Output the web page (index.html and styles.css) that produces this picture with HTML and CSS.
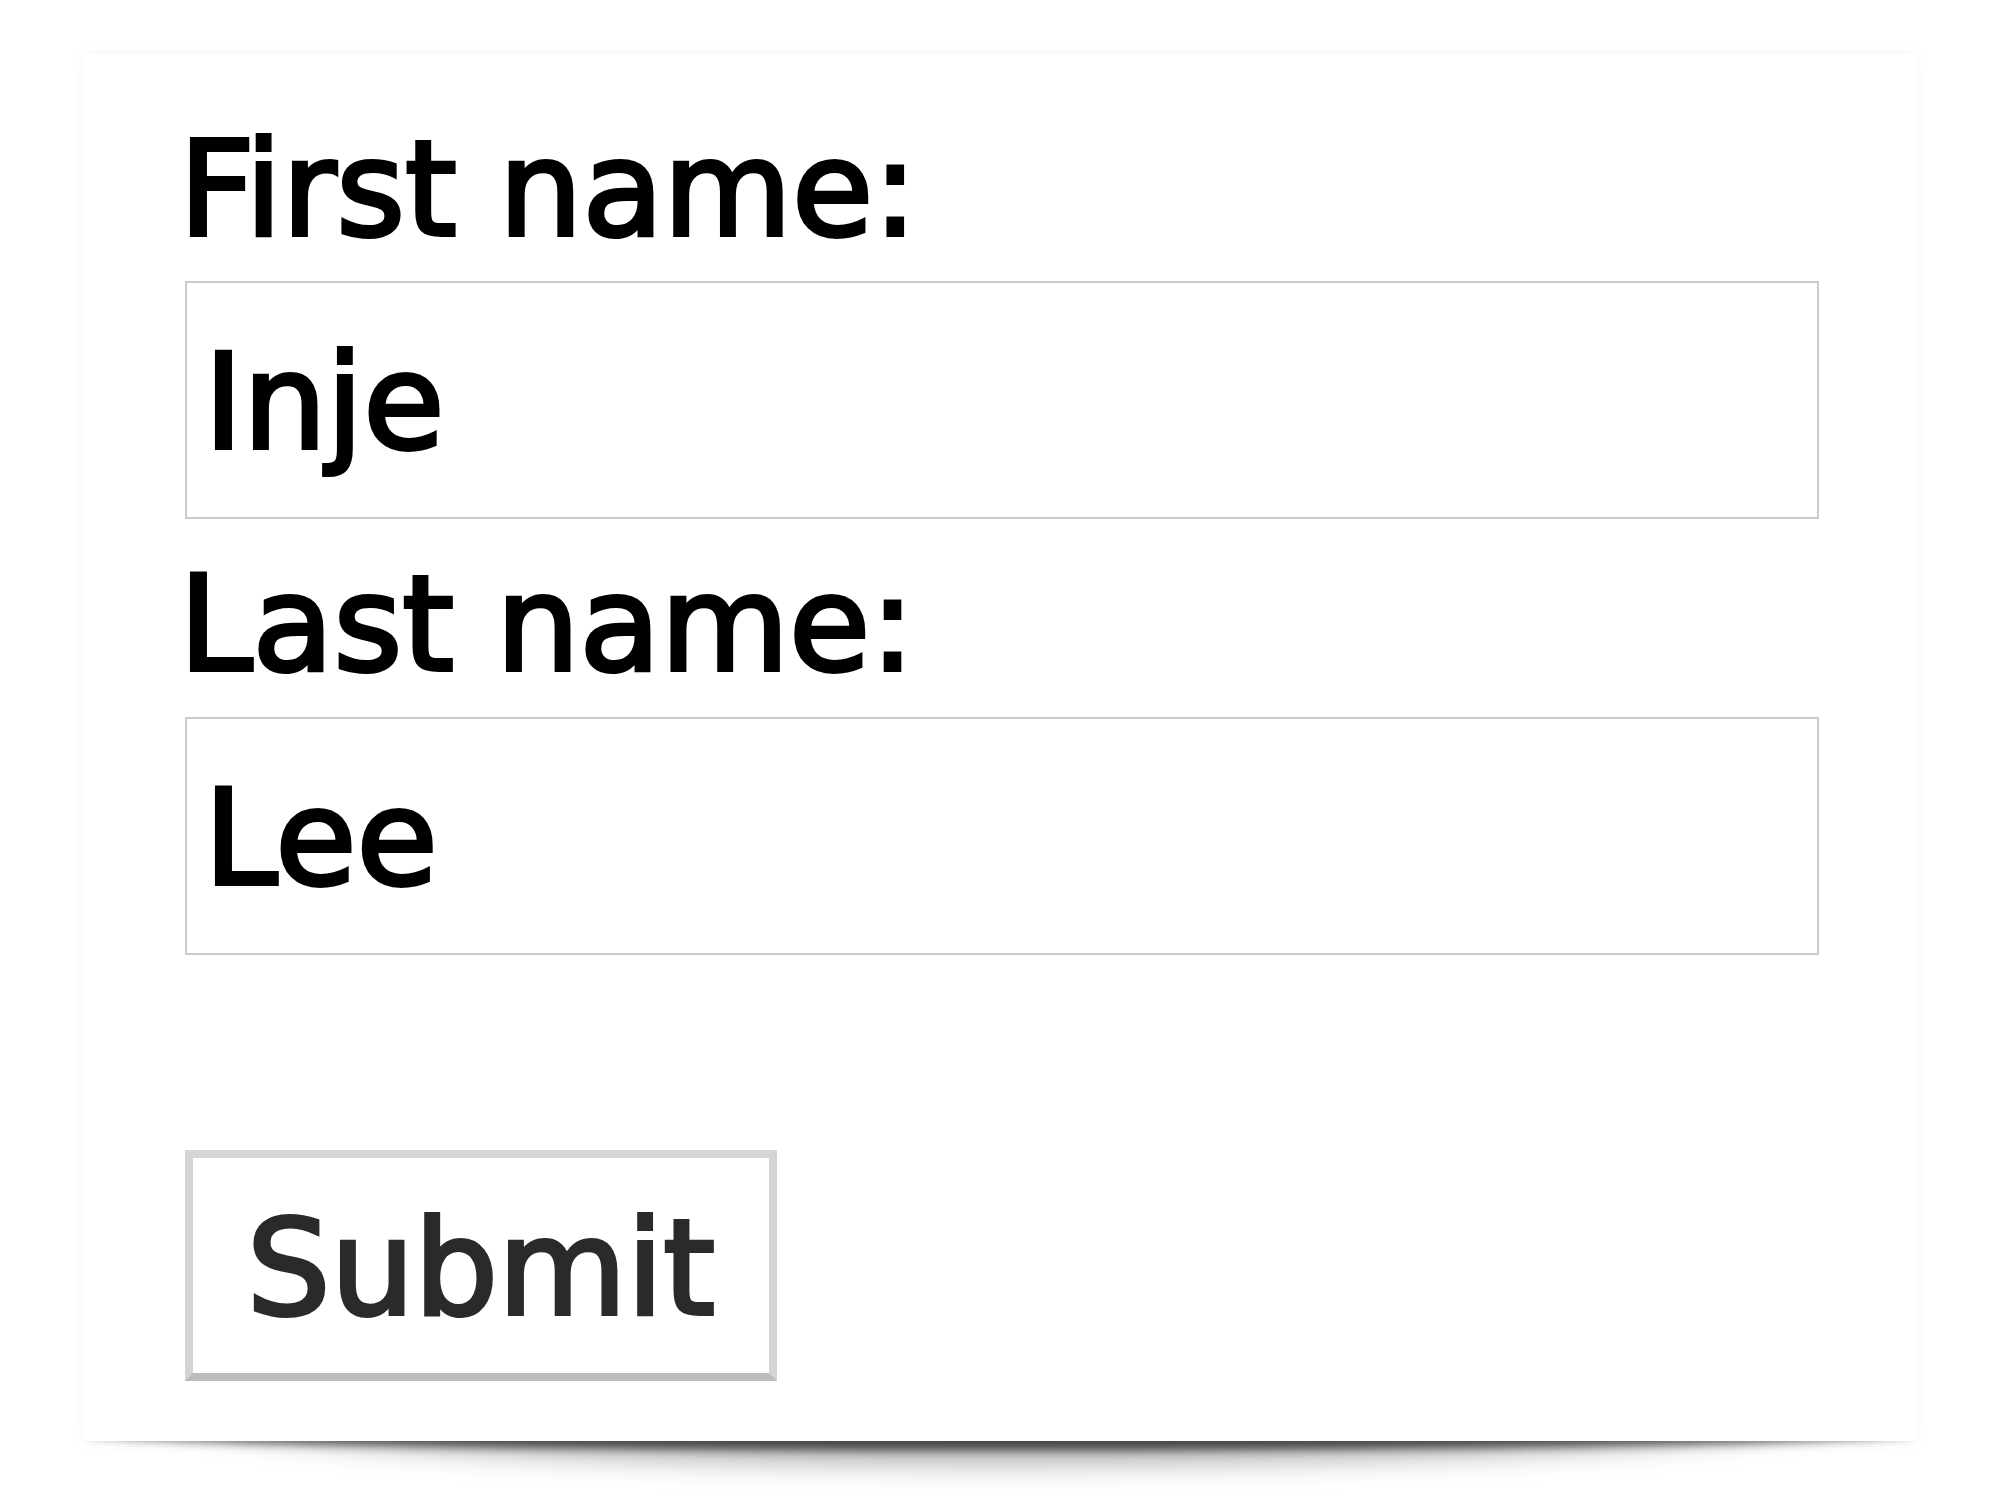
FILE: index.html
```html
<!DOCTYPE html>
<html>
<head>
<meta charset="utf-8">
<link rel="stylesheet" href="styles.css">
</head>
<body>
<div class="page">
  <div class="card">
    <form class="form">
      <label class="label" for="fname">First name:</label>
      <input class="field" id="fname" type="text" value="Inje">
      <label class="label label-second" for="lname">Last name:</label>
      <input class="field field-second" id="lname" type="text" value="Lee">
      <button class="submit" type="button">Submit</button>
    </form>
  </div>
  <div class="card-shadow"></div>
</div>
</body>
</html>
```

FILE: styles.css
```css
html {
  margin: 0;
  padding: 0;
  background: #ffffff;
}

body {
  margin: 0;
  min-height: 1507px;
  font-family: "DejaVu Sans", Verdana, sans-serif;
}

.page {
  padding: 54px 0 0 84px;
  width: 1832px;
}

.card {
  position: relative;
  z-index: 1;
  box-sizing: border-box;
  width: 1832px;
  height: 1387px;
  background: #ffffff;
  padding: 58px 97px 0 101px;
  box-shadow: 0 0 18px rgba(0, 0, 0, 0.045);
}

.card-shadow {
  position: relative;
  width: 1832px;
  height: 66px;
  overflow: hidden;
}

.card-shadow::before {
  content: "";
  position: absolute;
  left: 0;
  right: 0;
  top: -34px;
  height: 34px;
  border-radius: 50%;
  box-shadow: 0 9px 10px rgba(0, 0, 0, 0.58);
}

.card-shadow::after {
  content: "";
  position: absolute;
  left: 4%;
  right: 4%;
  top: -110px;
  height: 110px;
  border-radius: 50%;
  box-shadow: 0 20px 30px rgba(0, 0, 0, 0.36);
}

.form {
  display: flex;
  flex-direction: column;
  align-items: flex-start;
}

.label {
  display: block;
  font-size: 132px;
  line-height: 154px;
  color: #000000;
  margin-left: -6px;
  -webkit-text-stroke: 4px #000000;
}

.label-second {
  margin-top: 28px;
}

.field {
  box-sizing: border-box;
  width: 1634px;
  height: 238px;
  margin: 15px 0 0 0;
  padding: 4px 14px 0 17px;
  border: 2px solid #cacaca;
  border-radius: 0;
  background: #ffffff;
  font-family: "DejaVu Sans", Verdana, sans-serif;
  font-size: 132px;
  color: #000000;
  -webkit-text-stroke: 4px #000000;
  outline: none;
}

.field-second {
  margin-top: 16px;
}

.submit {
  box-sizing: border-box;
  width: 592px;
  height: 231px;
  margin-top: 195px;
  padding: 4px 0 0 0;
  background: #ffffff;
  border-style: solid;
  border-width: 8px;
  border-color: #d6d6d6 #d4d4d4 #bcbcbc #d4d4d4;
  border-radius: 0;
  font-family: "DejaVu Sans", Verdana, sans-serif;
  font-size: 132px;
  line-height: 154px;
  color: #2a2a2a;
  -webkit-text-stroke: 4px #2a2a2a;
  text-align: center;
}
```
